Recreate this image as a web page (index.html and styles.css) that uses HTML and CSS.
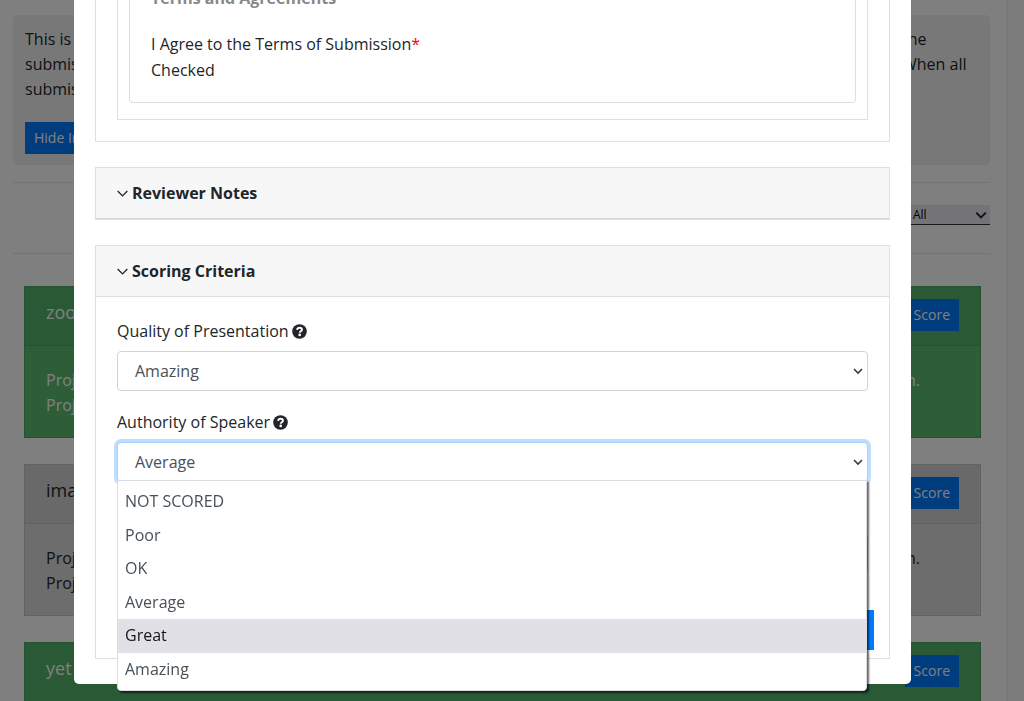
FILE: index.html
```
<!DOCTYPE html>
<html lang="en">
<head>
<meta charset="utf-8">
<title>Score Submissions</title>
<link rel="stylesheet" href="styles.css">
</head>
<body>
<svg class="sprite" aria-hidden="true">
  <symbol id="chevron" viewBox="0 0 10 10"><path d="M1 3l4 4 4-4" fill="none" stroke="currentColor" stroke-width="1.6"/></symbol>
  <symbol id="chevron-thin" viewBox="0 0 10 10"><path d="M.6 2.800l4.400 4.400 4.400-4.400" fill="none" stroke="currentColor" stroke-width="1.200"/></symbol>
  <symbol id="help" viewBox="0 0 16 16"><circle cx="8" cy="8" r="7.800" fill="currentColor"/><path d="M5.400 6.200c.3-1.500 1.300-2.200 2.700-2.200 1.400 0 2.500.8 2.500 2 0 1.700-2.300 1.700-2.300 3.200" fill="none" stroke="#fff" stroke-width="2"/><circle cx="8.200" cy="11.600" r="1.400" fill="#fff"/></symbol>
</svg>
<div class="page">
  <main class="content">
    <section class="intro">
      <p class="line"><span>This is</span><span>the</span></p>
      <p class="line"><span>submissions</span><span>When all</span></p>
      <p class="line"><span>submissions</span></p>
      <button class="btn btn-small" type="button">Hide Instructions</button>
    </section>
    <hr class="rule">
    <div class="filter">
      <select class="filter-select" aria-label="Filter"><option>All</option></select>
      <svg class="filter-arrow"><use href="#chevron"/></svg>
    </div>
    <hr class="rule">
    <div class="cards">
      <article class="card card-done">
        <header class="card-head"><h2 class="card-title">zoom</h2><button class="btn btn-small" type="button">Score</button></header>
        <div class="card-body"><p class="line"><span>Project</span><span class="tail">n.</span></p><p class="line"><span>Project</span></p></div>
      </article>
      <article class="card">
        <header class="card-head"><h2 class="card-title">image</h2><button class="btn btn-small" type="button">Score</button></header>
        <div class="card-body"><p class="line"><span>Project</span><span class="tail">n.</span></p><p class="line"><span>Project</span></p></div>
      </article>
      <article class="card card-done">
        <header class="card-head"><h2 class="card-title">yet</h2><button class="btn btn-small" type="button">Score</button></header>
        <div class="card-body"></div>
      </article>
    </div>
  </main>
</div>
<div class="backdrop">
  <div class="modal" role="dialog" aria-label="Score submission">
    <section class="panel panel-details">
      <div class="frame">
        <div class="terms">
          <h3 class="terms-title">Terms and Agreements</h3>
          <p class="terms-text">I Agree to the Terms of Submission<span class="required">*</span></p>
          <p class="terms-text">Checked</p>
        </div>
      </div>
    </section>
    <section class="panel">
      <h3 class="panel-head panel-closed"><svg class="toggle"><use href="#chevron-thin"/></svg>Reviewer Notes</h3>
    </section>
    <section class="panel">
      <h3 class="panel-head"><svg class="toggle"><use href="#chevron-thin"/></svg>Scoring Criteria</h3>
      <form class="scores">
        <div class="field">
          <label class="label" for="quality">Quality of Presentation <svg class="help"><use href="#help"/></svg></label>
          <div class="picker"><select class="select" id="quality"><option>Amazing</option></select><svg class="arrow"><use href="#chevron"/></svg></div>
        </div>
        <div class="field">
          <label class="label" for="authority">Authority of Speaker <svg class="help"><use href="#help"/></svg></label>
          <div class="picker">
            <select class="select select-open" id="authority"><option>Average</option></select><svg class="arrow"><use href="#chevron"/></svg>
            <ul class="menu" role="listbox" aria-label="Authority of Speaker">
              <li class="option" role="option">NOT SCORED</li>
              <li class="option" role="option">Poor</li>
              <li class="option" role="option">OK</li>
              <li class="option" role="option">Average</li>
              <li class="option option-active" role="option" aria-selected="true">Great</li>
              <li class="option" role="option">Amazing</li>
            </ul>
          </div>
        </div>
        <div class="field field-last">
          <div class="picker"><select class="select" aria-label="Score"><option></option></select></div>
        </div>
        <div class="actions"><button class="btn btn-save" type="button" aria-label="Save"></button></div>
      </form>
    </section>
  </div>
</div>
</body>
</html>
```
FILE: styles.css
```
* { box-sizing: border-box; }
body {
  margin: 0;
  height: 100vh;
  overflow: hidden;
  background: #f8f8f8;
  color: #212529;
  font: 16px/25px "Segoe UI", "Open Sans", sans-serif;
}
h2, h3, p, ul { margin: 0; padding: 0; }
button, select { font: inherit; }
.sprite { position: absolute; width: 0; height: 0; }

.page {
  height: 100%;
  overflow: hidden;
  margin-right: 16px;
  padding: 15px 16px 0 13px;
  background: #fff;
  border-right: 2px solid #f3f3f3;
}
.intro { padding: 12px 12px 11px; background: #f1f1f1; border-radius: 5px; }
.line { display: grid; grid-template-columns: 1fr 76px; }
.tail { padding-left: 23px; }
.btn { border: 0; background: #007bff; color: #fff; }
.btn-small { height: 32px; padding: 0 9px; font-size: 14px; line-height: 32px; }
.intro .btn-small { display: block; margin-top: 20px; }
.rule { margin: 17px 0 22px; border: 0; border-top: 1px solid #e6e6e6; }
.filter { display: grid; width: 100px; margin-left: auto; margin-bottom: 28px; }
.filter-select, .filter-arrow { grid-area: 1 / 1; }
.filter-select {
  height: 20px;
  padding: 0 23px;
  appearance: none;
  border: 0;
  border-bottom: 1px solid #333;
  border-radius: 0;
  background: #e9e9ed;
  color: #000;
  font-size: 12px;
  line-height: 19px;
}
.filter-arrow { justify-self: end; align-self: center; width: 12px; height: 12px; margin-right: 3px; }
.cards { display: grid; gap: 26px; padding: 10px 9px 0 11px; }
.card { border: 1px solid #c4c4c4; background: #dadada; }
.card-head {
  display: flex;
  justify-content: space-between;
  align-items: flex-start;
  padding: 12px 21px 14px;
  border-bottom: 1px solid #c4c4c4;
  background: #d2d2d2;
}
.card-title { padding-top: 1px; font-size: 18px; font-weight: 400; line-height: 25px; }
.card-body { padding: 22px 21px 19px; }
.card-done { border-color: #4fa561; background: #5abd70; color: #fff; }
.card-done .card-head { border-color: #4fa561; background: #55b26a; }

.backdrop {
  position: fixed;
  inset: 0;
  padding: 0 11% 0 74px;
  background: rgba(0, 0, 0, .5);
}
.modal {
  display: grid;
  gap: 25px;
  margin-top: -14px;
  padding: 0 21px 25px;
  border-radius: 0 0 5px 5px;
  background: #fff;
}
.panel { border: 1px solid #dfdfdf; }
.panel-details { border-top: 0; padding: 0 21px 21px; }
.frame { padding: 0 11px 16px; border: 1px solid #dfdfdf; border-top: 0; }
.terms { padding: 0 21px 19px; border: 1px solid #dfdfdf; border-top: 0; border-radius: 0 0 4px 4px; }
.terms-title { margin-bottom: 20px; color: #888; font-size: 16px; line-height: 25px; }
.terms-text { line-height: 26px; }
.required { color: #f00; }
.panel-head {
  display: flex;
  align-items: center;
  gap: 4px;
  padding: 13px 21px 12px;
  border-bottom: 1px solid #dfdfdf;
  background: #f7f7f7;
  font-size: 16px;
  line-height: 25px;
}
.panel-closed { border-color: #d6d6d6; }
.toggle { width: 11px; height: 11px; }
.scores { padding: 22px 21px 8px; }
.field { margin-bottom: 19px; }
.label { display: flex; align-items: center; gap: 3px; margin-bottom: 7px; }
.help { width: 15px; height: 15px; }
.picker { position: relative; display: grid; }
.select, .arrow { grid-area: 1 / 1; }
.select {
  width: 100%;
  height: 40px;
  padding: 0 17px;
  appearance: none;
  border: 1px solid #ced4da;
  border-radius: 4px;
  background: #fff;
  color: #495057;
}
.select-open { border-color: #a6d1ff; box-shadow: 0 0 0 3px #bfdeff; }
.arrow { justify-self: end; align-self: center; width: 10px; height: 10px; margin-right: 5px; color: #343a40; }
.field-last { padding-top: 32px; margin-bottom: 37px; }
.menu {
  position: absolute;
  z-index: 2;
  top: 38px;
  left: 0;
  right: 1px;
  display: grid;
  grid-template-rows: repeat(6, 1fr);
  height: 211px;
  padding: 4px 0;
  border: 1px solid #dcdce2;
  border-radius: 0 0 4px 4px;
  background: #fff;
  box-shadow: 2px 2px 2px rgba(0, 0, 0, .6);
  list-style: none;
}
.option { display: flex; align-items: center; padding: 0 7px; color: #495057; }
.option-active { background: #e0e0e6; color: #15141a; }
.actions { display: flex; justify-content: flex-end; margin-right: -6px; }
.btn-save { width: 80px; height: 40px; }
```
